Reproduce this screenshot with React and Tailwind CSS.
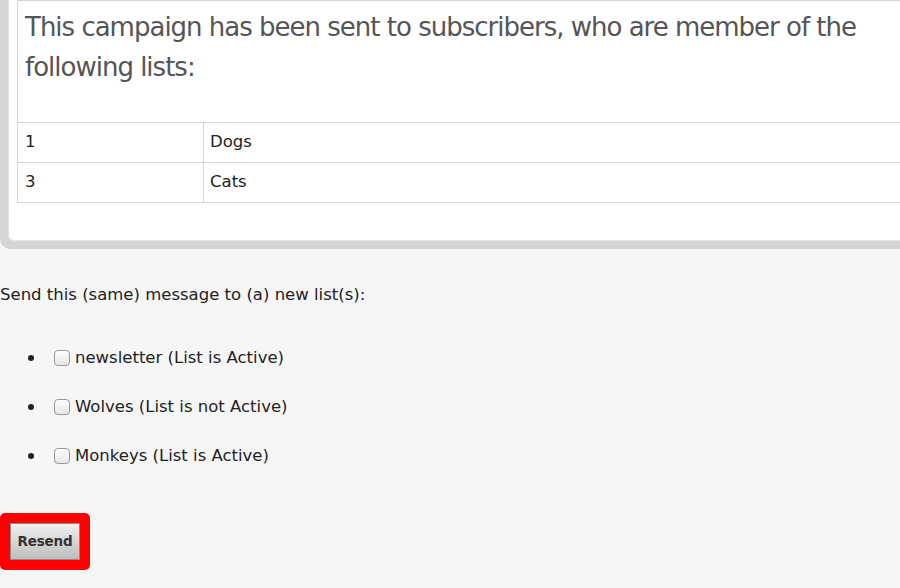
export default function App() {
    const lists = [
        { name: 'newsletter', active: true },
        { name: 'Wolves', active: false },
        { name: 'Monkeys', active: true },
    ];

    return (
        <div className="min-h-screen w-[900px] h-[588px] overflow-hidden bg-[#f6f6f6] text-[16.5px] text-[#222] font-['DejaVu_Sans',Verdana,sans-serif]">
            {/* Campaign panel */}
            <div className="w-[920px] bg-[#d5d5d5] pl-2 pb-2 rounded-bl-[10px]">
                <div className="bg-white border-l border-b border-[#e2e2e2] rounded-bl-[6px] pl-2 pb-[37px]">
                    <table className="w-[910px] border-collapse">
                        <tbody>
                            <tr>
                                <td colSpan={2} className="border border-[#d6d6d6] pl-[7px] pr-2 pt-[6px] pb-[35px]">
                                    <h2 className="text-[26px] leading-[40px] tracking-[-1px] text-[#555] font-normal">
                                        This campaign has been sent to subscribers, who are member of the following lists:
                                    </h2>
                                </td>
                            </tr>
                            <tr>
                                <td className="w-[186px] h-10 border border-[#d6d6d6] pl-[7px]">1</td>
                                <td className="h-10 border border-[#d6d6d6] pl-[6px]">Dogs</td>
                            </tr>
                            <tr>
                                <td className="w-[186px] h-10 border border-[#d6d6d6] pl-[7px]">3</td>
                                <td className="h-10 border border-[#d6d6d6] pl-[6px]">Cats</td>
                            </tr>
                        </tbody>
                    </table>
                </div>
            </div>

            {/* Resend form */}
            <p className="mt-[37px] leading-[18px]">Send this (same) message to (a) new list(s):</p>
            <ul className="mt-[45px] pl-[28px] flex flex-col gap-[31px]">
                {lists.map((l) => (
                    <li key={l.name} className="flex items-center h-[18px] leading-[18px]">
                        <span className="w-[6px] h-[6px] rounded-full bg-[#222] mr-[20px]" />
                        <input type="checkbox" className="appearance-none shrink-0 w-4 h-4 mr-[5px] rounded-[4px] border border-[#999] bg-gradient-to-b from-white to-[#e6e6e6]" />
                        <span>{l.name} (List is {l.active ? 'Active' : 'not Active'})</span>
                    </li>
                ))}
            </ul>

            <div className="mt-[48px] inline-block border-[10px] border-[#ff0000] rounded-[5px] bg-[#ff0000]">
                <button className="block w-[70px] h-[37px] border border-[#8a8a8a] bg-gradient-to-b from-[#f0f0f0] to-[#bdbdbd] text-[13.5px] font-bold text-[#333] tracking-[-0.2px]">
                    Resend
                </button>
            </div>
        </div>
    );
}
